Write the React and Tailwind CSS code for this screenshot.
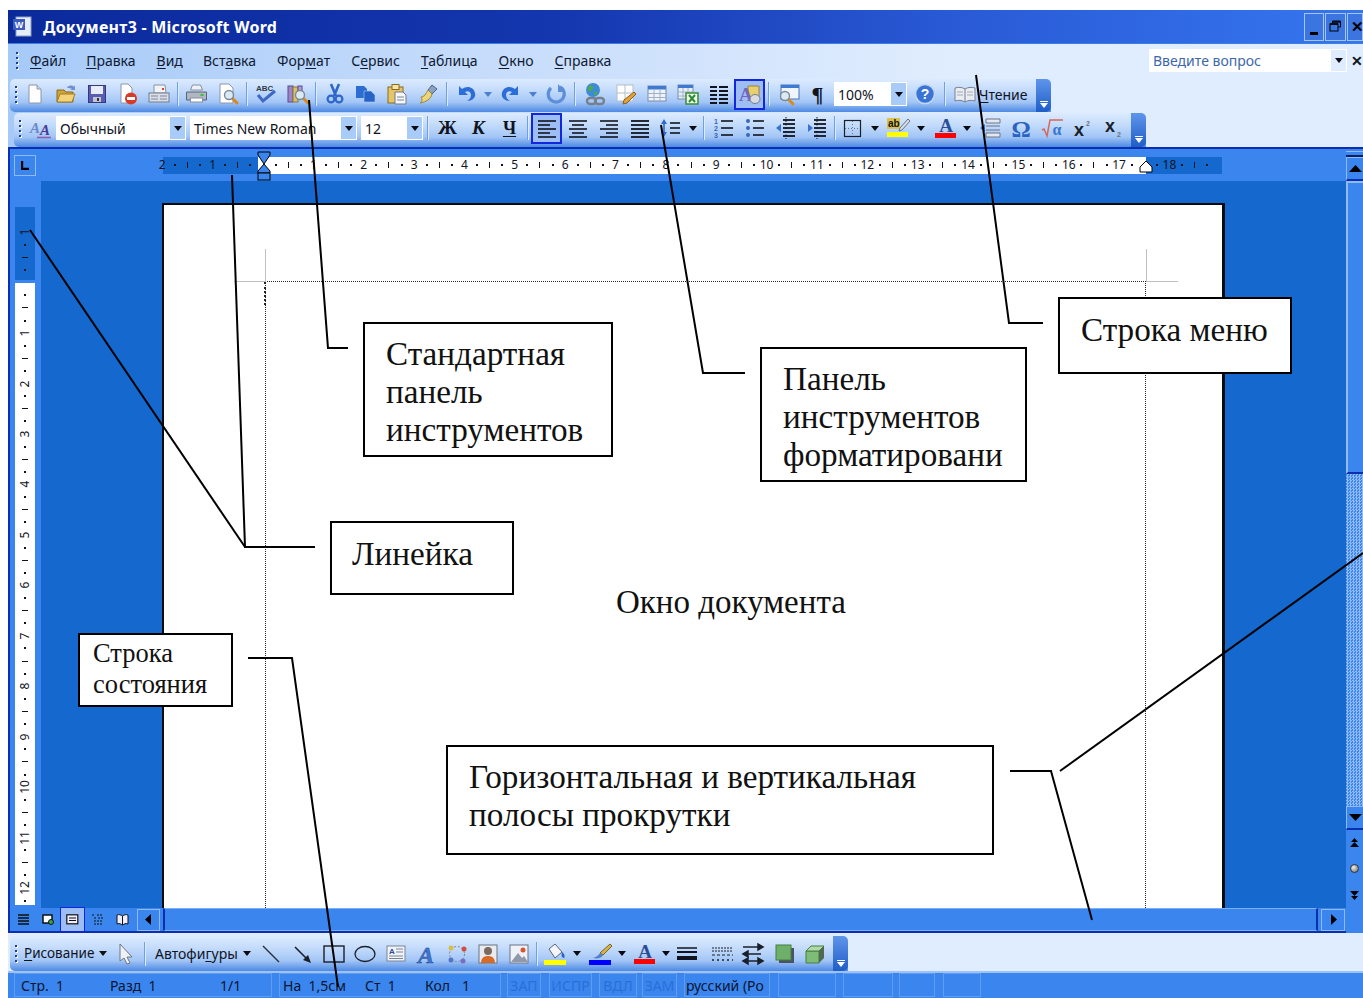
import React from "react";

const UI = "font-['Noto_Sans','Liberation_Sans',sans-serif]";

// Small drop-down triangle used by combos, split buttons and menus
const Caret = ({ size = 8, color = "#0a0a14" }) => (
  <svg width={size} height={size / 2 + 1} viewBox="0 0 8 5"><path d="M0 0h8L4 5z" fill={color} /></svg>
);

const Ico = ({ children, w = 22, h = 22 }) => (
  <svg width={w} height={h} viewBox="0 0 22 22" className="block overflow-visible">{children}</svg>
);

const Lens = ({ x = 13, y = 13 }) => (
  <g>
    <path d={`M${x + 3} ${y + 3}l5 5`} stroke="#d98a1e" strokeWidth="3" strokeLinecap="round" />
    <circle cx={x} cy={y} r="4.5" fill="#dbe9f5" stroke="#7a8a96" strokeWidth="1.4" />
  </g>
);

const Lines = ({ rows, stroke = "#12151f", w = 1.6 }) => (
  <g stroke={stroke} strokeWidth={w}>
    {rows.map(([x1, x2, y], i) => <path key={i} d={`M${x1} ${y}H${x2}`} />)}
  </g>
);

const icons = {
  newDoc: <Ico><path d="M5 2h8l4 4v14H5z" fill="#fff" stroke="#8c96aa" /><path d="M13 2v4h4" fill="#d5dbe6" stroke="#8c96aa" /></Ico>,
  open: <Ico><path d="M2 7h7l2 2h7v10H2z" fill="#d0a238" stroke="#8c6b1c" /><path d="M2 19l3-8h15l-3 8z" fill="#f3d27a" stroke="#a17e28" /><path d="M12 5c2-3 5-3 7-1l1-2v5h-5l2-1c-1-1-3-1-5-1z" fill="#6c8fd0" /></Ico>,
  save: <Ico><rect x="2.5" y="2.5" width="17" height="17" fill="#5a5cb4" stroke="#35377f" /><rect x="5" y="3" width="12" height="8" fill="#e8ecf6" /><rect x="7" y="14" width="8" height="5" fill="#c2c6d2" /><rect x="11" y="15" width="2" height="3" fill="#333" /></Ico>,
  perm: <Ico><path d="M4 1h7l4 4v15H4z" fill="#fff" stroke="#8c96aa" /><circle cx="14" cy="15.5" r="6" fill="#d83a26" /><rect x="10" y="14" width="8" height="3" fill="#fff" /></Ico>,
  mail: <Ico w={26}><path d="M6 10V2h11l1 8z" fill="#f1f3f7" stroke="#8a94a5" /><rect x="1" y="10" width="20" height="9" fill="#d9dde5" stroke="#717c8e" /><path d="M3 13h7M3 16h7M12 13h7M12 16h7" stroke="#7e8aa0" /><rect x="14" y="5" width="2" height="2" fill="#d8452e" /></Ico>,
  print: <Ico w={25}><path d="M5 7l2-5h8l2 5z" fill="#eef1f5" stroke="#87909f" /><path d="M1 9h20v8H1z" fill="#aeb7c2" stroke="#5a6575" /><rect x="5" y="15" width="12" height="4" fill="#fff" stroke="#87909f" /><rect x="15" y="11" width="3" height="2" fill="#36c23e" /></Ico>,
  preview: <Ico><path d="M3 1h9l4 4v15H3z" fill="#fff" stroke="#8c96aa" /><Lens x={12} y={12} /></Ico>,
  spell: <Ico w={24}><text x="1" y="8" fontSize="8" fontWeight="700" fill="#333b4c" fontFamily="Liberation Sans">ABC</text><path d="M3 12l5 6L20 8" fill="none" stroke="#3f69c4" strokeWidth="3" /></Ico>,
  research: <Ico><rect x="2" y="3" width="5" height="16" fill="#9d84c8" stroke="#5d4b8e" /><rect x="7" y="4" width="5" height="15" fill="#d7c26b" stroke="#8a7a3a" /><rect x="12" y="3" width="4" height="8" fill="#b49ad6" stroke="#5d4b8e" /><Lens x={14} y={12} /></Ico>,
  cut: <Ico><path d="M7 1l5 12M15 1l-5 12" stroke="#2f67c8" strokeWidth="2.6" /><circle cx="7" cy="16" r="3.4" fill="none" stroke="#2f67c8" strokeWidth="2.2" /><circle cx="15" cy="16" r="3.4" fill="none" stroke="#2f67c8" strokeWidth="2.2" /></Ico>,
  copy: <Ico><path d="M1 3h8l3 3v9H1z" fill="#2c6dd2" /><path d="M9 8h7l4 4v7H9z" fill="#2563c6" stroke="#b3cdf2" strokeWidth=".6" /></Ico>,
  paste: <Ico><rect x="2" y="4" width="15" height="16" fill="#e8c468" stroke="#8b6a1e" /><rect x="6" y="1.5" width="7" height="5" fill="#f6e6ad" stroke="#8b6a1e" /><path d="M9 9h8l3 3v9H9z" fill="#f7f8fa" stroke="#6f7a8c" /><path d="M11 14h7M11 17h7" stroke="#7c8798" /></Ico>,
  brush: <Ico><path d="M15 2l5 4-5 5-4-4z" fill="#8aa0c4" stroke="#4f6484" /><path d="M11 7l4 4c-1 5-6 8-12 9 3-2 2-4 1-6 3 0 5-3 7-7z" fill="#ecd478" stroke="#9c8432" /></Ico>,
  undo: <Ico><path d="M4 3v9h9l-3-3c3-2 6 0 6 3 0 3-2 5-4 6 6 0 9-4 8-8-1-6-8-8-13-4z" fill="#2c6dd8" /></Ico>,
  redo: <Ico><path d="M18 3v9H9l3-3c-3-2-6 0-6 3 0 3 2 5 4 6-6 0-9-4-8-8 1-6 8-8 13-4z" fill="#2c6dd8" /></Ico>,
  reset: <Ico><path d="M15 4a8 8 0 1 1-9 1" fill="none" stroke="#5d8ed8" strokeWidth="3.2" /><path d="M13 1v8h7z" fill="#5d8ed8" /></Ico>,
  link: <Ico w={24}><circle cx="9" cy="7" r="7" fill="#3d8ad8" /><path d="M5 3c3-2 5 0 4 3-2 3-5 1-6 3M10 9c3-1 4 1 3 3-2 1-3 0-3-3" fill="#4bab4b" /><g fill="none" stroke="#76808e" strokeWidth="2.4"><rect x="3" y="15" width="9" height="6" rx="3" /><rect x="11" y="15" width="9" height="6" rx="3" /></g></Ico>,
  tablesPen: <Ico><rect x="2" y="2" width="16" height="16" fill="#fff" stroke="#b6bec9" /><path d="M10 2v16M2 10h16" stroke="#b6bec9" /><path d="M19 9l2 2-9 9-4 1 1-4z" fill="#e2a13c" stroke="#8d5e14" /></Ico>,
  table: <Ico><rect x="2" y="3" width="18" height="15" fill="#eef3fb" stroke="#7a8ca8" /><rect x="2" y="3" width="18" height="3.5" fill="#3f7ad2" /><path d="M8 7v11M14 7v11M2 10.5h18M2 14.5h18" stroke="#a0b0c6" /></Ico>,
  excel: <Ico><rect x="1" y="2" width="15" height="14" fill="#e8eef8" stroke="#7a8ca8" /><rect x="1" y="2" width="15" height="3" fill="#3f7ad2" /><path d="M6 5v11M11 5v11M1 9h15M1 13h15" stroke="#a0b0c6" /><rect x="9" y="10" width="12" height="11" fill="#f2f7ea" stroke="#3e9142" strokeWidth="1.6" /><path d="M12 12l6 7M18 12l-6 7" stroke="#2a8a38" strokeWidth="2" /></Ico>,
  cols: <Ico><Lines w={2} rows={[[2,9,4],[2,9,8],[2,9,12],[2,9,16],[2,9,20],[11,20,4],[11,20,8],[11,20,12],[11,20,16],[11,20,20]]} /></Ico>,
  drawing: <Ico><path d="M9 3h11v11H9z" fill="#e9cf6f" stroke="#9a8430" /><text x="0" y="18" fontSize="19" fontWeight="700" fill="#7466c0" fontFamily="Liberation Serif">A</text><ellipse cx="16" cy="16" rx="5" ry="4.5" fill="#d8dce2" stroke="#737c8a" /></Ico>,
  docMap: <Ico><rect x="3" y="2" width="18" height="14" fill="#f0f4fb" stroke="#4c76b8" /><rect x="3" y="2" width="18" height="3" fill="#3f7ad2" /><Lens x={7} y={13} /></Ico>,
  help: <Ico><circle cx="11" cy="11" r="9.5" fill="#3a75d6" stroke="#c2d7f5" strokeWidth="1.6" /><text x="11" y="16" textAnchor="middle" fontSize="14" fontWeight="700" fill="#fff" fontFamily="Liberation Sans">?</text></Ico>,
  book: <Ico><path d="M1 5c3-1 7-1 10 1 3-2 7-2 10-1v13c-3-1-7-1-10 1-3-2-7-2-10-1z" fill="#e9ecf1" stroke="#78808e" /><path d="M11 6v13" stroke="#78808e" /><path d="M3 9h6M3 12h6M13 9h6M13 12h6" stroke="#a5acb8" /></Ico>,
  styles: <Ico><text x="0" y="16" fontSize="15" fontStyle="italic" fontWeight="700" fontFamily="Liberation Serif"><tspan fill="#6d8ac8">A</tspan><tspan dy="2" fill="#4b3a96">A</tspan></text><path d="M7 20.5h14" stroke="#8a5fb0" strokeWidth="1.6" /></Ico>,
  left: <Ico><Lines rows={[[2,20,4],[2,14,8],[2,20,12],[2,14,16],[2,20,20]]} /></Ico>,
  center: <Ico><Lines rows={[[2,20,4],[5,17,8],[2,20,12],[5,17,16],[2,20,20]]} /></Ico>,
  right: <Ico><Lines rows={[[2,20,4],[8,20,8],[2,20,12],[8,20,16],[2,20,20]]} /></Ico>,
  justify: <Ico><Lines w={1.8} rows={[[2,20,4],[2,20,8],[2,20,12],[2,20,16],[2,20,20]]} /></Ico>,
  spacing: <Ico><path d="M4 2l3 5H1zM4 20l3-5H1z" fill="#2f6ad0" /><path d="M4 6v10" stroke="#2f6ad0" strokeWidth="1.6" /><Lines rows={[[10,20,6],[10,20,11],[10,20,16]]} /></Ico>,
  numbered: <Ico><g fill="#3a67b8" fontSize="7" fontWeight="700" fontFamily="Liberation Sans"><text x="1" y="7">1</text><text x="1" y="14">2</text><text x="1" y="21">3</text></g><Lines rows={[[8,20,4],[8,20,11],[8,20,18]]} /></Ico>,
  bullets: <Ico><g fill="#3a67b8"><circle cx="4" cy="4" r="2" /><circle cx="4" cy="11" r="2" /><circle cx="4" cy="18" r="2" /></g><Lines rows={[[9,20,4],[9,20,11],[9,20,18]]} /></Ico>,
  outdent: <Ico><path d="M1 11l5-4v8z" fill="#3a72d2" /><Lines w={1.8} rows={[[8,20,3],[8,20,7],[8,20,11],[8,20,15],[8,20,19]]} /><path d="M11 0v22" stroke="#12151f" strokeDasharray="1.5 2" /></Ico>,
  indent: <Ico><path d="M7 11L2 7v8z" fill="#3a72d2" /><Lines w={1.8} rows={[[8,20,3],[8,20,7],[8,20,11],[8,20,15],[8,20,19]]} /><path d="M11 0v22" stroke="#12151f" strokeDasharray="1.5 2" /></Ico>,
  border: <Ico><rect x="2.5" y="3.5" width="16" height="16" fill="none" stroke="#1a1f2a" strokeWidth="1.2" /><path d="M10.5 4v15M3 11.5h15" stroke="#6a7484" strokeDasharray="1 2" /></Ico>,
  highlight: <Ico w={24}><rect x="0" y="1" width="13" height="11" fill="#dcc24a" /><text x="1" y="10" fontSize="10" fontWeight="700" fill="#111" fontFamily="Liberation Sans">ab</text><path d="M21 2l2 2-8 9-3 1 1-3z" fill="#d9dde4" stroke="#6a7484" /><rect x="0" y="15" width="21" height="5" fill="#ffff00" /></Ico>,
  fontColor: <Ico w={22}><text x="11" y="15" textAnchor="middle" fontSize="19" fontWeight="700" fill="#2b4d96" fontFamily="Liberation Serif">A</text><rect x="0" y="16" width="21" height="5" fill="#ff0000" /></Ico>,
  toggle: <Ico><path d="M1 11l5-4v8z" fill="#3a72d2" /><path d="M7 2h14v4H7zM7 16h14v4H7z" fill="#e3e9f2" stroke="#6a7484" /><path d="M7 9h14M7 13h14" stroke="#6a7484" /></Ico>,
  omega: <Ico w={24}><text x="11" y="20" textAnchor="middle" fontSize="24" fontWeight="700" fill="#2a63c4" fontFamily="Liberation Serif">Ω</text></Ico>,
  formula: <Ico w={24}><path d="M1 13l2-1 3 7 3-16h13" fill="none" stroke="#d66a5a" strokeWidth="1.5" /><text x="16" y="18" textAnchor="middle" fontSize="16" fontWeight="700" fill="#3a77cf" fontFamily="Liberation Serif">α</text></Ico>,
  sup: <Ico><text x="1" y="19" fontSize="18" fontWeight="700" fill="#1a1f2a" fontFamily="Liberation Sans">x</text><text x="13" y="9" fontSize="7" fontWeight="700" fill="#6a7484" fontFamily="Liberation Sans">2</text></Ico>,
  sub: <Ico><text x="1" y="15" fontSize="18" fontWeight="700" fill="#1a1f2a" fontFamily="Liberation Sans">x</text><text x="13" y="20" fontSize="7" fontWeight="700" fill="#6a7484" fontFamily="Liberation Sans">2</text></Ico>,
  cursor: <Ico><path d="M5 1v17l4-3 3 6 3-1-3-6h5z" fill="#eef1f6" stroke="#6c7686" /></Ico>,
  line: <Ico><path d="M2 3l16 16" stroke="#2a3040" strokeWidth="1.4" /></Ico>,
  arrow: <Ico><path d="M3 4l13 13" stroke="#1a1f2a" strokeWidth="1.6" /><path d="M19 20l-8-3 5-5z" fill="#1a1f2a" /></Ico>,
  rect: <Ico><rect x="1" y="3" width="20" height="16" fill="none" stroke="#1a1f2a" strokeWidth="1.4" /></Ico>,
  ellipse: <Ico><ellipse cx="11" cy="11" rx="10" ry="7.5" fill="none" stroke="#1a1f2a" strokeWidth="1.3" /></Ico>,
  textbox: <Ico><rect x="2" y="3" width="18" height="15" fill="#f0f3f8" stroke="#7a8596" /><text x="4" y="11" fontSize="8" fontWeight="700" fill="#2b4d96" fontFamily="Liberation Sans">A</text><path d="M11 6h7M11 9h7M4 13h14M4 15.5h14" stroke="#7a8596" /></Ico>,
  wordart: <Ico><text x="11" y="20" textAnchor="middle" fontSize="24" fontWeight="700" fontStyle="italic" fill="#3f76d0" stroke="#1f4596" strokeWidth=".5" fontFamily="Liberation Serif">A</text></Ico>,
  diagram: <Ico><circle cx="11" cy="11" r="7.5" fill="none" stroke="#7a8596" strokeDasharray="2 2" /><circle cx="5" cy="5" r="2.5" fill="#d7be4a" /><circle cx="18" cy="6" r="2.5" fill="#cf4e3c" /><circle cx="5" cy="17" r="2.5" fill="#5475c8" /><circle cx="17" cy="18" r="2.5" fill="#7a6cc0" /></Ico>,
  clipart: <Ico><rect x="2" y="2" width="18" height="18" fill="#e9ebef" stroke="#6a7484" /><circle cx="11" cy="8" r="4" fill="#7a6a60" /><path d="M4 20c0-6 4-7 7-7s7 1 7 7z" fill="#d76a28" /></Ico>,
  picture: <Ico><rect x="2" y="2" width="18" height="18" fill="#eef2f8" stroke="#6a7484" /><circle cx="15" cy="7" r="2.5" fill="#d8552e" /><path d="M3 19l7-9 4 5 2-2 4 6z" fill="#8f99aa" /></Ico>,
  fill: <Ico w={24}><path d="M5 6l6-5 7 8-7 6z" fill="#f3f5f9" stroke="#5a6474" /><path d="M18 9c3 2 3 5 2 6-2 0-3-3-2-6z" fill="#2a63c4" /><rect x="0" y="17" width="22" height="5" fill="#ffff00" /></Ico>,
  pen: <Ico w={24}><path d="M21 1l2 2-9 9-3-2z" fill="#d8b24a" stroke="#7a6320" /><path d="M11 10l3 2c-1 3-6 4-10 3 3-1 5-2 7-5z" fill="#4f7fd0" /><rect x="0" y="17" width="22" height="5" fill="#0000ff" /></Ico>,
  thick: <Ico><Lines w={1.5} rows={[[1,21,5]]} /><Lines w={2} rows={[[1,21,9]]} /><Lines w={4} rows={[[1,21,15]]} /></Ico>,
  dash: <Ico><g stroke="#1a1f2a"><path d="M1 5h21M1 8h21" strokeDasharray="2 1" /><path d="M1 12h21" strokeDasharray="3 2" /><path d="M1 17h21" strokeDasharray="2 3" strokeWidth="1.4" /></g></Ico>,
  arrows: <Ico><g stroke="#1a1f2a" strokeWidth="1.5" fill="#1a1f2a"><path d="M1 4h18" /><path d="M21 4l-5-3v6z" /><path d="M1 11h18" /><path d="M1 11l5-3v6z" /><path d="M3 18h16" /><path d="M1 18l5-3v6zM21 18l-5-3v6z" /></g></Ico>,
  shadow: <Ico><rect x="6" y="5" width="15" height="15" fill="#4a5366" /><rect x="3" y="2" width="15" height="15" fill="#6eb06a" stroke="#44803f" /></Ico>,
  cube: <Ico><path d="M2 8h13v12H2z" fill="#7ebc78" stroke="#44803f" /><path d="M2 8l5-5h13l-5 5z" fill="#b2d8aa" stroke="#44803f" /><path d="M15 8l5-5v12l-5 5z" fill="#4f6a50" /></Ico>,
};

const Grip = ({ className = "" }) => (
  <div className={`flex flex-col gap-[3px] ${className}`}>
    {[0, 1, 2, 3].map((i) => <i key={i} className="block w-[2px] h-[2px] bg-[#1c3f94] shadow-[1px_1px_0_#fff]" />)}
  </div>
);

const Slot = ({ name, className = "" }) => (
  <div className={`w-[31px] h-[30px] shrink-0 flex items-center justify-center ${className}`}>{icons[name]}</div>
);

const ActiveSlot = ({ name }) => (
  <div className="w-[31px] h-[31px] shrink-0 flex items-center justify-center bg-[#9dbdf5] border-2 border-[#1226e0]">{icons[name]}</div>
);

const Drop = ({ className = "w-[14px]", color }) => (
  <div className={`shrink-0 flex items-center justify-center ${className}`}><Caret color={color} /></div>
);

const Sep = ({ className = "w-[7px]" }) => (
  <div className={`shrink-0 flex justify-center ${className}`}><i className="block w-[2px] h-[24px] bg-[#dcebff] border-l border-[#6f9fe6]" /></div>
);

const Chevron = ({ className = "" }) => (
  <div className={`w-[15px] self-stretch shrink-0 rounded-r-[5px] bg-[linear-gradient(180deg,#5f95ea,#1f5ec8)] flex flex-col items-center justify-end pb-[4px] gap-[1px] ${className}`}>
    <i className="block w-[8px] h-[1px] bg-white" />
    <svg width="8" height="5" viewBox="0 0 8 5"><path d="M0 0h8L4 5z" fill="#fff" /></svg>
  </div>
);

const Combo = ({ text, className, color }) => (
  <div className={`h-[24px] bg-white flex items-center shrink-0 text-[14px] text-[#10141f] ${className}`}>
    <span className="pl-[4px] flex-1 whitespace-nowrap overflow-hidden">{text}</span>
    <div className="w-[15px] h-[22px] mr-[1px] bg-[#a9cbf8] flex items-center justify-center"><Caret color={color} /></div>
  </div>
);

const toolbarFace = "bg-[linear-gradient(180deg,#dcebff_0%,#c3dbfb_35%,#a3c6f6_70%,#4d89e4_100%)]";

const Key = ({ children }) => <span className="underline underline-offset-2">{children}</span>;

const MenuItem = ({ k, before = "", after, className }) => (
  <span className={`shrink-0 ${className}`}>{before}<Key>{k}</Key>{after}</span>
);

const TitleBar = () => (
  <div className="h-[34px] shrink-0 flex items-center bg-[linear-gradient(90deg,#0a2a9c_0%,#1436ae_40%,#2a5ad6_70%,#3576ee_100%)] border-b border-[#3a7ee8]">
    <div className="ml-[5px] w-[21px] h-[21px] relative flex items-center">
      <svg width="21" height="21" viewBox="0 0 21 21"><rect x="3" y="1" width="15" height="19" fill="#e8eef8" stroke="#8f9fc0" /><rect x="0" y="3" width="12" height="11" fill="#3b5bc0" /><text x="6" y="12" textAnchor="middle" fontSize="9" fontWeight="700" fill="#fff" fontFamily="Liberation Sans">W</text></svg>
    </div>
    <span className="ml-[9px] text-white font-bold text-[16px] tracking-[0.25px] whitespace-nowrap font-['Noto_Sans',sans-serif]">Документ3 - Microsoft Word</span>
    <div className="ml-auto flex gap-[1px]">
      <div className="w-[20px] h-[28px] bg-[#3a75e0] border border-[#a3c4f5] flex items-end justify-center pb-[5px]"><i className="block w-[8px] h-[3px] bg-black" /></div>
      <div className="w-[21px] h-[28px] bg-[#3a75e0] border border-[#a3c4f5] flex items-center justify-center">
        <svg width="13" height="13" viewBox="0 0 13 13"><path d="M3.5 3.5V1h8v6H9" fill="none" stroke="#000" /><rect x="1" y="4" width="8" height="7" fill="none" stroke="#000" /><path d="M1 4h8M3 2h8" stroke="#000" strokeWidth="1.5" /></svg>
      </div>
      <div className="w-[16px] h-[28px] bg-[#3a75e0] border border-[#a3c4f5] flex items-center pl-[3px]"><span className="text-black font-bold text-[15px]">✕</span></div>
    </div>
  </div>
);

const MenuBar = () => (
  <div className={`h-[35px] shrink-0 flex items-center pb-[2px] text-[14px] text-[#0f1a33] ${UI}`}>
    <Grip className="ml-[8px]" />
    <MenuItem className="ml-[12px]" k="Ф" after="айл" />
    <MenuItem className="ml-[20px]" k="П" after="равка" />
    <MenuItem className="ml-[21px]" k="В" after="ид" />
    <MenuItem className="ml-[20px]" before="Вст" k="а" after="вка" />
    <MenuItem className="ml-[21px]" before="Фор" k="м" after="ат" />
    <MenuItem className="ml-[21px]" before="С" k="е" after="рвис" />
    <MenuItem className="ml-[21px]" k="Т" after="аблица" />
    <MenuItem className="ml-[21px]" k="О" after="кно" />
    <MenuItem className="ml-[21px]" k="С" after="правка" />
    <div className="ml-auto w-[198px] h-[23px] mb-[1px] bg-white flex items-center text-[14px] text-[#3d68a8]">
      <span className="pl-[4px] flex-1">Введите вопрос</span>
      <div className="w-[15px] h-[21px] mr-[1px] bg-[#dfecfe] flex items-center justify-center"><Caret /></div>
    </div>
    <span className="ml-[4px] mb-[1px] text-[14px] font-bold text-[#101420]">✕</span>
  </div>
);

const StandardBar = () => (
  <div className={`h-[33px] w-[1041px] ml-[2px] shrink-0 flex items-center pb-[3px] rounded-l-[5px] ${toolbarFace} ${UI}`}>
    <Grip className="ml-[5px] mr-[2px]" />
    <Slot name="newDoc" /><Slot name="open" /><Slot name="save" /><Slot name="perm" /><Slot name="mail" />
    <Sep /><Slot name="print" /><Slot name="preview" />
    <Sep /><Slot name="spell" /><Slot name="research" />
    <Sep /><Slot name="cut" /><Slot name="copy" /><Slot name="paste" /><Slot name="brush" />
    <Sep /><Slot name="undo" /><Drop color="#4d7fd0" /><Slot name="redo" /><Drop color="#4d7fd0" /><Slot name="reset" />
    <Sep className="w-[8px]" /><Slot name="link" /><Slot name="tablesPen" /><Slot name="table" /><Slot name="excel" /><Slot name="cols" />
    <ActiveSlot name="drawing" />
    <Sep className="w-[8px]" /><Slot name="docMap" />
    <div className="w-[27px] h-[30px] shrink-0 flex items-center justify-center text-[22px] font-bold text-[#10141f] font-['Liberation_Serif',serif]">¶</div>
    <div className="ml-[3px]"><Combo text="100%" className="w-[73px]" /></div>
    <Slot name="help" className="ml-[2px]" />
    <Sep className="w-[9px]" />
    <Slot name="book" className="w-[26px]" />
    <span className="-ml-[1px] text-[14px] text-[#10141f] whitespace-nowrap"><Key>Ч</Key>тение</span>
    <Chevron className="ml-auto -mb-[3px]" />
  </div>
);

const FormatBar = () => (
  <div className={`h-[34px] w-[1132px] ml-[6px] mt-[1px] shrink-0 flex items-center pb-[4px] rounded-l-[5px] ${toolbarFace} ${UI}`}>
    <Grip className="ml-[5px] mr-[4px]" />
    <Slot name="styles" />
    <Combo text="Обычный" className="w-[130px]" />
    <Combo text="Times New Roman" className="ml-[4px] w-[167px]" />
    <Combo text="12" className="ml-[4px] w-[62px]" />
    <Sep className="w-[9px]" />
    <div className="w-[31px] text-center text-[19px] font-bold text-[#10141f] font-['Liberation_Serif',serif] shrink-0">Ж</div>
    <div className="w-[31px] text-center text-[19px] font-bold italic text-[#10141f] font-['Liberation_Serif',serif] shrink-0">К</div>
    <div className="w-[31px] text-center text-[18px] font-bold underline underline-offset-2 text-[#10141f] font-['Liberation_Serif',serif] shrink-0">Ч</div>
    <Sep className="w-[6px]" />
    <ActiveSlot name="left" />
    <Slot name="center" /><Slot name="right" /><Slot name="justify" /><Slot name="spacing" />
    <Drop />
    <Sep className="w-[8px]" />
    <Slot name="numbered" /><Slot name="bullets" /><Slot name="outdent" /><Slot name="indent" />
    <Sep className="w-[5px]" />
    <Slot name="border" /><Drop /><Slot name="highlight" /><Drop className="w-[15px]" /><Slot name="fontColor" className="ml-[2px]" /><Drop className="w-[12px]" />
    <Slot name="toggle" className="ml-[1px]" /><Slot name="omega" /><Slot name="formula" /><Slot name="sup" className="ml-[1px]" /><Slot name="sub" />
    <Chevron className="ml-auto -mb-[4px]" />
  </div>
);

const Ruler = ({ labels }) => (
  <div className="flex">
    {labels.map((n, i) => (
      <div key={i} className="grid grid-cols-4 w-[50.36px] shrink-0 items-center justify-items-center h-[17px]">
        <span className="text-[12px] leading-none text-[#10141f]">{n}</span>
        <i className="block w-[2px] h-[2px] bg-[#10141f]" />
        <i className="block w-[1px] h-[6px] bg-[#10141f]" />
        <i className="block w-[2px] h-[2px] bg-[#10141f]" />
      </div>
    ))}
  </div>
);

const RulerRow = () => (
  <div className={`h-[32px] shrink-0 flex items-center bg-[#3a86ee] relative ${UI}`}>
    <div className="ml-[4px] w-[22px] h-[21px] border border-[#8fbaf5] flex items-center justify-center">
      <svg width="9" height="9" viewBox="0 0 9 9"><path d="M1 0v8h7" fill="none" stroke="#000" strokeWidth="2.4" /></svg>
    </div>
    <div className="ml-[120px] w-[1066px] overflow-hidden bg-[linear-gradient(90deg,transparent_7px,#1468ce_7px,#1468ce_102px,#fff_102px,#fff_990px,#1468ce_990px,#1468ce_1066px,transparent_1066px)]">
      <Ruler labels={["2", "1", "", "1", "2", "3", "4", "5", "6", "7", "8", "9", "10", "11", "12", "13", "14", "15", "16", "17", "18", ""]} />
    </div>
    {/* Indent handles that sit on top of the ruler */}
    <svg className="absolute left-[247px] top-[2px]" width="14" height="30" viewBox="0 0 14 30">
      <path d="M1 1h12v3l-6 9-6-9z" fill="#3a86ee" stroke="#000" />
      <path d="M1 22v-2l6-7 6 7v2z" fill="#3a86ee" stroke="#000" />
      <rect x="1" y="22" width="12" height="7" fill="#3a86ee" stroke="#000" />
    </svg>
    <svg className="absolute left-[1129px] top-[10px]" width="14" height="15" viewBox="0 0 14 15"><path d="M1 13V8l6-6 6 6v5z" fill="#fff" stroke="#000" /></svg>
  </div>
);

const VerticalRuler = () => {
  const labels = ["1", "", "1", "2", "3", "4", "5", "6", "7", "8", "9", "10", "11", "12"];
  return (
    <div className={`w-[31px] shrink-0 bg-[#3a86ee] pl-[5px] pt-[26px] ${UI}`}>
      <div className="w-[20px] h-[698px] pt-[19px] overflow-hidden bg-[linear-gradient(180deg,#1468ce_73px,#3a86ee_73px,#3a86ee_76px,#fff_76px)]">
        {labels.map((n, i) => (
          <div key={i} className="grid grid-rows-4 h-[50.45px] items-center justify-items-center">
            <span className="text-[12px] leading-none text-[#10141f] -rotate-90">{n}</span>
            <i className="block w-[2px] h-[2px] bg-[#10141f]" />
            <i className="block w-[6px] h-[1px] bg-[#10141f]" />
            <i className="block w-[2px] h-[2px] bg-[#10141f]" />
          </div>
        ))}
      </div>
    </div>
  );
};

const Page = () => (
  <div className="flex-1 bg-[#1468ce] pl-[121px] pt-[22px] overflow-hidden">
    <div className="w-[1063px] h-[705px] bg-white border-t-2 border-l-2 border-r-[3px] border-[#0a0a0a] pl-[101px] pt-[76px]">
      <div className="relative w-[881px] h-[629px] border-l border-r border-t border-dotted border-[#222] pt-[304px] pl-[350px]">
        <span className="text-[33px] leading-none text-[#111] font-['Liberation_Serif',serif] whitespace-nowrap">Окно документа</span>
        {/* Crop marks and the caret at the first line */}
        <i className="absolute -left-px -top-[33px] w-px h-[33px] bg-[#c0c0c0]" />
        <i className="absolute -left-[32px] -top-px w-[31px] h-px bg-[#c0c0c0]" />
        <i className="absolute -right-[2px] -top-[33px] w-px h-[33px] bg-[#c0c0c0]" />
        <i className="absolute -right-[33px] -top-px w-[31px] h-px bg-[#c0c0c0]" />
        <i className="absolute -left-[2px] top-0 w-[2px] h-[23px] border-l-2 border-dotted border-[#222]" />
      </div>
    </div>
  </div>
);

const ScrollArrow = ({ d, className }) => (
  <div className={`border border-[#8fbaf5] flex items-center justify-center ${className}`}>
    <svg width="13" height="13" viewBox="0 0 13 13"><path d={d} fill="#000" /></svg>
  </div>
);

const HScroll = () => (
  <div className="h-[25px] shrink-0 bg-[#3a86ee] flex items-center border-b-2 border-[#0b2fb0]">
    <div className="ml-[2px] flex items-center">
      <div className="w-[23px] flex justify-center"><svg width="13" height="11" viewBox="0 0 13 11"><path d="M1 1h11M1 4h11M1 7h11M1 10h11" stroke="#111" strokeWidth="1.3" /></svg></div>
      <div className="w-[23px] flex justify-center ml-[2px]"><svg width="13" height="11" viewBox="0 0 13 11"><rect x="1" y="1" width="9" height="8" fill="#fff" stroke="#111" strokeWidth="1.5" /><circle cx="9" cy="8" r="2.5" fill="#3aa14a" stroke="#111" /></svg></div>
      <div className="w-[25px] h-[25px] bg-[#9dbdf5] border border-[#1226e0] flex items-center justify-center"><svg width="13" height="11" viewBox="0 0 13 11"><rect x=".8" y=".8" width="11" height="9" fill="#eef" stroke="#111" strokeWidth="1.2" /><path d="M3 4h7M3 6.500h7" stroke="#111" /></svg></div>
      <div className="w-[25px] flex justify-center"><svg width="13" height="11" viewBox="0 0 13 11"><path d="M1 1h3M6 1h6M3 4h2M7 4h5M3 7h9M3 10h9" stroke="#111" strokeDasharray="2 1" /></svg></div>
      <div className="w-[25px] flex justify-center"><svg width="13" height="12" viewBox="0 0 13 12"><path d="M1 1c2-1 4 0 5.500 1C8 1 10 0 12 1v9c-2-1-4 0-5.500 1C5 10 3 9 1 10z" fill="#eef" stroke="#111" /><path d="M6.500 2v9" stroke="#111" /></svg></div>
    </div>
    <ScrollArrow d="M9 1v11L3 6.500z" className="ml-[2px] w-[23px] h-[22px]" />
    <div className="ml-[3px] w-[1155px] h-[23px] bg-[#3a86ee] border border-[#7aaef5] border-r-[#0b2fb0] border-r-2 border-l-[#0b2fb0] border-l-2" />
    <ScrollArrow d="M4 1v11l6-5.500z" className="ml-[3px] w-[24px] h-[22px]" />
  </div>
);

const VScroll = () => (
  <div className="w-[17px] shrink-0 bg-[#3a86ee] flex flex-col items-stretch">
    <div className="h-[6px] mt-[2px] border-t border-[#8fbaf5] border-b-2 border-b-[#0b1f60] shrink-0" />
    <ScrollArrow d="M6.500 3L13 10H0z" className="h-[24px] shrink-0 border-r-0 border-b-2 border-b-[#0b2fb0]" />
    <div className="h-[293px] shrink-0 border-2 border-r-0 border-[#8fbaf5] border-b-[#0b2fb0]" />
    <div className="flex-1 bg-[repeating-conic-gradient(#8fbaf5_0%_25%,#3a86ee_0%_50%)] bg-[length:3px_3px]" />
    <ScrollArrow d="M0 3h13L6.500 10z" className="h-[24px] shrink-0 border-r-0 border-b-2 border-b-[#0b2fb0]" />
    <div className="h-[78px] shrink-0 flex flex-col items-center justify-around">
      <svg width="9" height="10" viewBox="0 0 9 10"><path d="M4.500 0L8 4H1zM4.500 4L9 9H0z" fill="#000" /></svg>
      <span className="w-[9px] h-[9px] rounded-full bg-[radial-gradient(circle_at_35%_35%,#eee,#666)] border border-[#333]" />
      <svg width="9" height="10" viewBox="0 0 9 10"><path d="M0 1h9L4.500 6zM1 6h7L4.500 10z" fill="#000" /></svg>
    </div>
    <div className="h-[25px] shrink-0" />
  </div>
);

const DrawBar = () => (
  <div className="h-[38px] shrink-0 bg-[#e0edfe] pt-[3px]">
    <div className={`h-[35px] w-[838px] ml-[2px] flex items-center rounded-l-[5px] text-[14px] text-[#10141f] ${toolbarFace} ${UI}`}>
      <Grip className="ml-[5px] mr-[7px]" />
      <span className="w-[73px] shrink-0 whitespace-nowrap text-[13.5px]"><Key>Р</Key>исование</span>
      <Drop className="w-[12px]" color="#111" />
      <Slot name="cursor" className="ml-[1px]" />
      <Sep className="w-[8px]" />
      <span className="ml-[6px] w-[85px] shrink-0 whitespace-nowrap">Автофи<Key>г</Key>уры</span>
      <Drop />
      <Slot name="line" className="ml-[2px]" /><Slot name="arrow" /><Slot name="rect" /><Slot name="ellipse" /><Slot name="textbox" /><Slot name="wordart" className="-ml-[1px]" /><Slot name="diagram" /><Slot name="clipart" /><Slot name="picture" />
      <Sep className="w-[5px]" />
      <Slot name="fill" /><Drop /><Slot name="pen" /><Drop /><Slot name="fontColor" /><Drop className="w-[12px]" />
      <Slot name="thick" className="-ml-[1px]" /><Slot name="dash" className="ml-[4px]" /><Slot name="arrows" /><Slot name="shadow" /><Slot name="cube" />
      <Chevron className="ml-auto" />
    </div>
  </div>
);

const Cell = ({ className = "", children }) => (
  <div className={`h-[24px] shrink-0 border border-[#5f9df2] flex items-center whitespace-nowrap ${className}`}>{children}</div>
);

const StatusBar = () => (
  <div className={`h-[27px] shrink-0 bg-[#3a86ee] border-t-2 border-[#9cc2f6] pl-[6px] flex items-start gap-[7px] text-[14px] text-[#0b1530] ${UI}`}>
    <Cell className="w-[258px] pl-[6px]"><span className="w-[89px]">Стр.&nbsp; 1</span><span className="w-[110px]">Разд&nbsp; 1</span><span>1/1</span></Cell>
    <Cell className="w-[222px] pl-[3px]"><span className="w-[82px]">На&nbsp; 1,5см</span><span className="w-[60px]">Ст&nbsp; 1</span><span className="w-[37px]">Кол</span><span>1</span></Cell>
    <div className="flex gap-[8px] -ml-[1px] text-[#2a6fd6]">
      <Cell className="w-[34px] justify-center">ЗАП</Cell>
      <Cell className="w-[43px] justify-center">ИСПР</Cell>
      <Cell className="w-[38px] justify-center -ml-[1px]">ВДЛ</Cell>
      <Cell className="w-[35px] justify-center -ml-[3px]">ЗАМ</Cell>
    </div>
    <Cell className="w-[86px] pl-[1px]">русский (Ро</Cell>
    <Cell className="w-[58px] ml-[1px]" />
    <Cell className="w-[50px]" />
    <Cell className="w-[36px] -ml-px" />
    <Cell className="w-[38px] ml-px" />
  </div>
);

// Text labels with the leader lines that point at parts of the window
const Label = ({ className, children }) => (
  <div className={`absolute bg-white border-2 border-black text-[#111] font-['Liberation_Serif',serif] whitespace-pre-line ${className}`}>{children}</div>
);

const large = "text-[33.2px] leading-[38px]";

const Annotations = () => (
  <>
    <svg className="absolute inset-0 pointer-events-none" width="1363" height="998" fill="none" stroke="#000" strokeWidth="2">
      <path d="M309 100L328 348H348" />
      <path d="M661 125L703 373H745" />
      <path d="M976 75L1009 323H1043" />
      <path d="M232 175L245 547H315" />
      <path d="M30 230L245 547" />
      <path d="M248 658H292L338 987" />
      <path d="M1010 771H1051L1092 920" />
      <path d="M1060 771L1363 553" />
    </svg>
    <Label className={`left-[363px] top-[322px] w-[250px] h-[135px] pl-[21px] pt-[11px] ${large}`}>{"Стандартная\nпанель\nинструментов"}</Label>
    <Label className={`left-[760px] top-[347px] w-[267px] h-[135px] pl-[21px] pt-[11px] ${large}`}>{"Панель\nинструментов\nформатировани"}</Label>
    <Label className={`left-[1058px] top-[297px] w-[234px] h-[77px] pl-[21px] pt-[12px] ${large}`}>Строка меню</Label>
    <Label className={`left-[330px] top-[521px] w-[184px] h-[74px] pl-[20px] pt-[12px] ${large}`}>Линейка</Label>
    <Label className="left-[78px] top-[633px] w-[155px] h-[74px] pl-[13px] pt-[3px] text-[26.5px] leading-[31px]">{"Строка\nсостояния"}</Label>
    <Label className={`left-[446px] top-[745px] w-[548px] h-[110px] pl-[21px] pt-[11px] ${large}`}>{"Горизонтальная и вертикальная\nполосы прокрутки"}</Label>
  </>
);

export default function App() {
  return (
    <div className="relative w-[1363px] h-[998px] overflow-hidden bg-white pt-[10px] pl-[8px] flex flex-col">
      <TitleBar />
      <div className="shrink-0 h-[105px] border-b-2 border-[#0b2fb0] bg-[linear-gradient(90deg,#a6caf8_0%,#c6dcfb_35%,#e0edfe_70%,#e0edfe_100%)] flex flex-col">
        <MenuBar />
        <StandardBar />
        <FormatBar />
      </div>
      <div className="flex h-[784px] shrink-0 border-l-2 border-[#0b2fb0]">
        <div className="flex-1 flex flex-col min-w-0">
          <RulerRow />
          <div className="flex h-[727px] shrink-0">
            <VerticalRuler />
            <Page />
          </div>
          <HScroll />
        </div>
        <VScroll />
      </div>
      <DrawBar />
      <StatusBar />
      <Annotations />
    </div>
  );
}
